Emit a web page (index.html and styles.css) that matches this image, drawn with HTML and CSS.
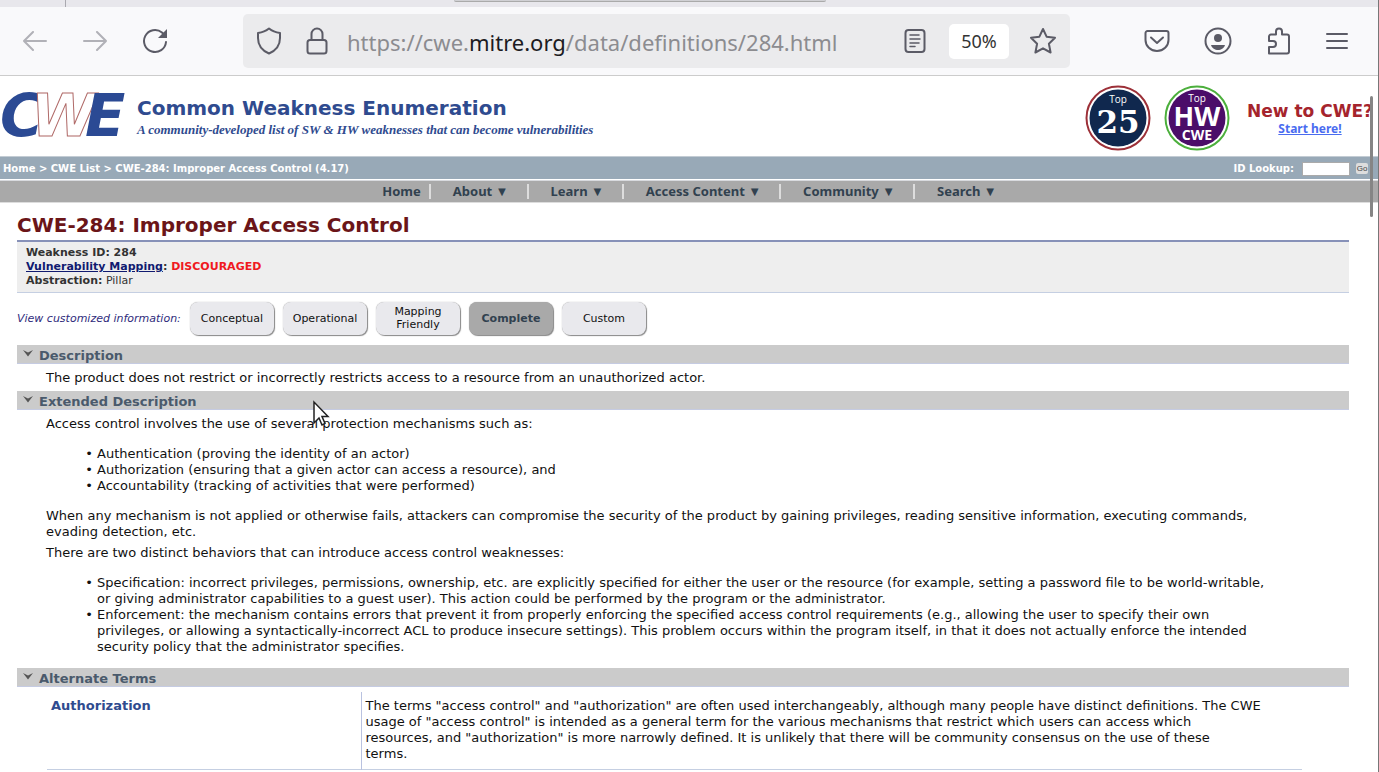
FILE: index.html
```html
<!DOCTYPE html>
<html lang="en">
<head>
<meta charset="utf-8">
<title>CWE-284: Improper Access Control (4.17)</title>
<link rel="stylesheet" href="styles.css">
</head>
<body>
<div class="tabstrip"><span class="tab-divider"></span><span class="tab-active"></span></div>
<div class="toolbar">
  <div class="nav-buttons">
    <button class="icon-btn faded" aria-label="Back"><svg width="26" height="24" viewBox="0 0 26 24"><path d="M24 12H2M11 3L2 12l9 9"/></svg></button>
    <button class="icon-btn faded" aria-label="Forward"><svg width="26" height="24" viewBox="0 0 26 24"><path d="M2 12h22M15 3l9 9-9 9"/></svg></button>
    <button class="icon-btn" aria-label="Reload"><svg width="26" height="26" viewBox="0 0 26 26"><path d="M24 14A11 11 0 1 1 20 4.500l2 2"/><path class="solid" d="M25 1v9h-9z"/></svg></button>
  </div>
  <div class="urlbar">
    <svg width="26" height="28" viewBox="0 0 26 28"><path d="M13 1.500C10 4 6 5.500 2 6v5c0 8 4 12.500 11 15.500C20 23.500 24 19 24 11V6C20 5.500 16 4 13 1.500z"/></svg>
    <svg class="lock" width="22" height="28" viewBox="0 0 22 28"><rect x="1.500" y="13" width="19" height="13.500" rx="2.500"/><path d="M5.500 13V7a5.500 5.500 0 0 1 11 0v6"/></svg>
    <div class="url">https://cwe.<b>mitre.org</b>/data/definitions/284.html</div>
    <svg width="22" height="26" viewBox="0 0 22 26"><rect x="1.500" y="2" width="19" height="22" rx="3"/><path class="fine" d="M6 7h9M6 11h10M6 15h9M6 18.500h5"/></svg>
    <button class="zoom">50%</button>
    <svg width="28" height="28" viewBox="0 0 28 28"><path d="M14 2l3.600 7.700 8.400 1.100-6.100 5.900 1.700 8.800-7.600-4.200-7.600 4.200 1.700-8.800L2 10.800l8.400-1.100z"/></svg>
  </div>
  <div class="tools">
    <button class="icon-btn" aria-label="Pocket"><svg width="26" height="24" viewBox="0 0 26 24"><path d="M3.500 2h19a2 2 0 0 1 2 2v7a11.500 11 0 0 1-23 0V4a2 2 0 0 1 2-2z"/><path d="M7 8.500l6 5.500 6-5.500"/></svg></button>
    <button class="icon-btn" aria-label="Account"><svg width="28" height="28" viewBox="0 0 28 28"><circle cx="14" cy="14" r="12.500"/><circle class="solid" cx="14" cy="11" r="4"/><path class="solid" d="M7 18h14c-1 3.500-4 5-7 5s-6-1.500-7-5z"/></svg></button>
    <button class="icon-btn" aria-label="Extensions"><svg width="26" height="28" viewBox="0 0 26 28"><path d="M3 26.500V20h4a3 3 0 0 0 0-6H3V9.500a2 2 0 0 1 2-2h5V4.500a3 3 0 0 1 6 0v3h5a2 2 0 0 1 2 2v15a2 2 0 0 1-2 2z"/></svg></button>
    <button class="icon-btn" aria-label="Menu"><svg width="22" height="18" viewBox="0 0 22 18"><path d="M1 2h20M1 9h20M1 16h20"/></svg></button>
  </div>
</div>
<header class="site-header">
  <svg class="logo" width="132" height="56" viewBox="0 0 132 56" role="img" aria-label="CWE">
    <text class="logo-c" x="0" y="48">C</text><text class="logo-w" x="31" y="48">W</text><text class="logo-e" x="85" y="48">E</text>
  </svg>
  <div class="brand">
    <div class="brand-name">Common Weakness Enumeration</div>
    <div class="brand-tag">A community-developed list of SW &amp; HW weaknesses that can become vulnerabilities</div>
  </div>
  <div class="badges">
    <svg width="66" height="66" viewBox="0 0 66 66" role="img"><circle cx="33" cy="33" r="31.500" fill="#fff" stroke="#9c3038" stroke-width="2"/><circle cx="33" cy="33" r="28.500" fill="#10284e"/><text class="b-top" x="33" y="18">Top</text><text class="b-num" x="33" y="48">25</text></svg>
    <svg width="66" height="66" viewBox="0 0 66 66" role="img"><circle cx="33" cy="33" r="31.500" fill="#fff" stroke="#4caf3c" stroke-width="2"/><circle cx="33" cy="33" r="28.500" fill="#4b0d69"/><text class="b-top" x="33" y="17">Top</text><text class="b-hw" x="33" y="41">HW</text><text class="b-cwe" x="33" y="55">CWE</text></svg>
  </div>
  <div class="newto"><strong>New to CWE?</strong><a href="#">Start here!</a></div>
</header>
<div class="crumbs">
  <div>Home &gt; CWE List &gt; CWE-284: Improper Access Control (4.17)</div>
  <form class="lookup"><label for="lookup">ID Lookup:</label><input id="lookup" type="text"><button type="button">Go</button></form>
</div>
<nav class="menu-bar">
  <a href="#">Home</a><a href="#">About ▼</a><a href="#">Learn ▼</a><a href="#">Access Content ▼</a><a href="#">Community ▼</a><a href="#">Search ▼</a>
</nav>
<main>
  <h1>CWE-284: Improper Access Control</h1>
  <div class="status">
    <div><b>Weakness ID: 284</b></div>
    <div><b><a href="#">Vulnerability Mapping</a>: <span class="discouraged">DISCOURAGED</span></b></div>
    <div><b>Abstraction:</b> Pillar</div>
  </div>
  <div class="views">
    <span class="views-label">View customized information:</span>
    <button>Conceptual</button><button>Operational</button><button>Mapping<br>Friendly</button><button class="on">Complete</button><button>Custom</button>
  </div>
  <h2><svg width="12" height="8" viewBox="0 0 12 8"><path d="M1 1l5 2.500L11 1 6 7.500z"/></svg>Description</h2>
  <div class="detail"><p>The product does not restrict or incorrectly restricts access to a resource from an unauthorized actor.</p></div>
  <h2><svg width="12" height="8" viewBox="0 0 12 8"><path d="M1 1l5 2.500L11 1 6 7.500z"/></svg>Extended Description</h2>
  <div class="detail extended">
    <p>Access control involves the use of several protection mechanisms such as:</p>
    <ul>
      <li>Authentication (proving the identity of an actor)</li>
      <li>Authorization (ensuring that a given actor can access a resource), and</li>
      <li>Accountability (tracking of activities that were performed)</li>
    </ul>
    <p>When any mechanism is not applied or otherwise fails, attackers can compromise the security of the product by gaining privileges, reading sensitive information, executing commands, evading detection, etc.</p>
    <p>There are two distinct behaviors that can introduce access control weaknesses:</p>
    <ul>
      <li>Specification: incorrect privileges, permissions, ownership, etc. are explicitly specified for either the user or the resource (for example, setting a password file to be world-writable, or giving administrator capabilities to a guest user). This action could be performed by the program or the administrator.</li>
      <li>Enforcement: the mechanism contains errors that prevent it from properly enforcing the specified access control requirements (e.g., allowing the user to specify their own privileges, or allowing a syntactically-incorrect ACL to produce insecure settings). This problem occurs within the program itself, in that it does not actually enforce the intended security policy that the administrator specifies.</li>
    </ul>
  </div>
  <h2><svg width="12" height="8" viewBox="0 0 12 8"><path d="M1 1l5 2.500L11 1 6 7.500z"/></svg>Alternate Terms</h2>
  <table class="terms"><tr><th scope="row">Authorization</th><td>The terms "access control" and "authorization" are often used interchangeably, although many people have distinct definitions. The CWE usage of "access control" is intended as a general term for the various mechanisms that restrict which users can access which<br>resources, and "authorization" is more narrowly defined. It is unlikely that there will be community consensus on the use of these<br>terms.</td></tr></table>
</main>
<div class="scroll-thumb"></div>
<div class="window-edge"></div>
<svg class="cursor" width="18" height="28" viewBox="0 0 18 28"><path d="M2 2v21l5-5 3 7 3-1.500-3-7h6z"/></svg>
</body>
</html>
```
FILE: styles.css
```css
* { box-sizing: border-box; }
body { margin: 0; height: 100vh; overflow: hidden; position: relative; background: #fff; color: #111; font: 13px/16px "DejaVu Sans", sans-serif; }
button { font: inherit; color: inherit; border: 0; padding: 0; background: none; }
p, ul, h1, h2 { margin: 0; }

.tabstrip { height: 7px; background: #e8e7ec; display: flex; }
.tab-divider { width: 66px; border-right: 1px solid #aaa9b0; }
.tab-active { width: 372px; height: 2px; margin-left: 388px; background: #d0d0d4; border-bottom: 1px solid #aaa; border-radius: 0 0 5px 5px; }
.toolbar { height: 69px; background: #f9f9fb; border-bottom: 1px solid #ccc; display: flex; align-items: center; padding: 0 31px 0 22px; }
.toolbar svg { display: block; fill: none; stroke: #5b5b66; stroke-width: 2; stroke-linejoin: round; stroke-linecap: round; }
.toolbar .solid { fill: #5b5b66; stroke: none; }
.toolbar .fine { stroke-width: 1.500; }
.faded { opacity: .45; }
.nav-buttons { display: flex; align-items: center; gap: 34px; width: 221px; }
.urlbar { flex: 0 1 827px; height: 54px; border-radius: 5px; background: #ebebed; display: flex; align-items: center; padding: 0 13px; }
.urlbar svg { flex: none; }
.lock { margin: 0 19px 0 24px; }
.url { flex: 1; font: 22px/32px "Noto Sans", sans-serif; color: #8c8c90; white-space: nowrap; padding-top: 2px; }
.url b { font-weight: 400; color: #1c1b22; }
.zoom { width: 60px; height: 35px; margin: 0 20px 0 23px; border-radius: 5px; background: #fff; font: 18px/35px "Noto Sans", sans-serif; color: #333; }
.tools { margin-left: auto; display: flex; align-items: center; gap: 34px; }

.site-header { height: 80px; display: flex; align-items: center; }
.logo { flex: none; }
.logo text { font: italic bold 59px "DejaVu Sans", sans-serif; }
.logo-c, .logo-e { fill: #2b4a94; }
.logo-w { fill: #fff; stroke: #b06a68; stroke-width: 1; }
.brand { margin-left: 5px; padding-top: 3px; color: #2f4b8f; }
.brand-name { font: bold 20px/24px "DejaVu Sans", sans-serif; }
.brand-tag { font: italic bold 13px/20px "Liberation Serif", serif; }
.badges { margin-left: auto; display: flex; gap: 13px; padding-top: 4px; }
.badges text { fill: #fff; text-anchor: middle; }
.b-top { font: 10px "Open Sans", sans-serif; }
.b-num { font: bold 31px "DejaVu Serif", serif; }
.b-hw { font: bold 27px "Open Sans", sans-serif; }
.b-cwe { font: bold 14px "Open Sans", sans-serif; }
.newto { width: 130px; margin: 8px 4px 0 15px; text-align: center; white-space: nowrap; display: flex; flex-direction: column; font: bold 12px/17px "Noto Sans", sans-serif; }
.newto strong { font: bold 17px/17px "DejaVu Sans", sans-serif; color: #a5242d; }
.newto a { color: #4a6cf0; }

.crumbs { height: 23px; background: #98a9b7; border-top: 1px solid #c3ccd4; display: flex; justify-content: space-between; align-items: center; padding: 1px 11px 0 3px; color: #fff; font: bold 10px/20px "DejaVu Sans", sans-serif; }
.lookup { display: flex; align-items: center; gap: 8px; }
.lookup input { width: 48px; height: 14px; border: 1px solid #aaa; background: #fff; padding: 0; }
.lookup button { width: 12px; height: 11px; margin-left: -2px; background: #ddd; color: #444; border-radius: 2px; font: 8px/11px "Liberation Sans", sans-serif; }
.menu-bar { height: 23px; margin-top: 1px; background: #a9a9a9; border-top: 1px solid #d8dade; border-bottom: 1px solid #ddd; display: flex; justify-content: center; align-items: center; font: bold 13px/15px "Noto Sans", sans-serif; }
.menu-bar a { color: #31414f; text-decoration: none; padding: 0 18px 0 22px; border-right: 2px solid #ddd; }
.menu-bar a:first-child { padding: 0 8px 0 0; }
.menu-bar a:last-child { border: 0; padding-right: 0; }

main { padding: 10px 30px 0 17px; }
h1 { font-size: 20px; line-height: 25px; height: 27px; color: #6b1518; }
.status { border-top: 2px solid #8791b8; border-bottom: 1px solid #c5cfe2; background: #eee; padding: 4px 9px; height: 53px; font-size: 11px; line-height: 14px; color: #333; }
.status > div { height: 14px; }
.status a { color: #101a70; }
.discouraged { color: #f01820; }
.views { display: flex; align-items: center; gap: 9px; height: 52px; padding-bottom: 2px; font-size: 11px; line-height: 13px; }
.views-label { font-style: italic; color: #302c7c; width: 164px; white-space: nowrap; }
.views button { width: 84px; height: 33px; border-radius: 8px; background: #e9e9ed; box-shadow: 1px 1px 1px #888, 0 0 1px #999; color: #111; }
.views .on { background: #a9a9a9; color: #31414f; font-weight: bold; }
h2 { display: flex; align-items: center; gap: 5px; height: 19px; padding: 2px 5px 0; background: #cbcbcb; border-bottom: 1px solid #c5cbe2; color: #4a5a6c; font-size: 13px; line-height: 17px; }
h2 svg { fill: #555; margin-bottom: 4px; }
.detail { padding: 6px 72px 5px 29px; }
.extended { padding-bottom: 13px; }
.detail p + p { margin-top: 5px; }
.detail ul { margin: 14px 0; padding-left: 51px; }
.detail ul:last-child { margin-bottom: 0; }
li::marker { content: "• "; }
.terms { width: calc(100% - 77px); margin: 5px 0 0 30px; border-collapse: collapse; border-bottom: 1px solid #c5cfe2; }
.terms th { width: 314px; text-align: left; vertical-align: top; padding: 6px 4px; color: #2f4b8f; }
.terms td { border-left: 1px solid #b9c2e0; padding: 6px 0 7px 4px; }

.scroll-thumb { position: absolute; left: calc(100% - 9px); top: 96px; width: 3px; height: 121px; background: #858585; border-radius: 2px; }
.window-edge { position: absolute; right: 0; top: 0; width: 1px; height: 100%; background: #777; }
.cursor { position: absolute; left: 312px; top: 400px; fill: #fff; stroke: #222; stroke-width: 1.500; }
```
